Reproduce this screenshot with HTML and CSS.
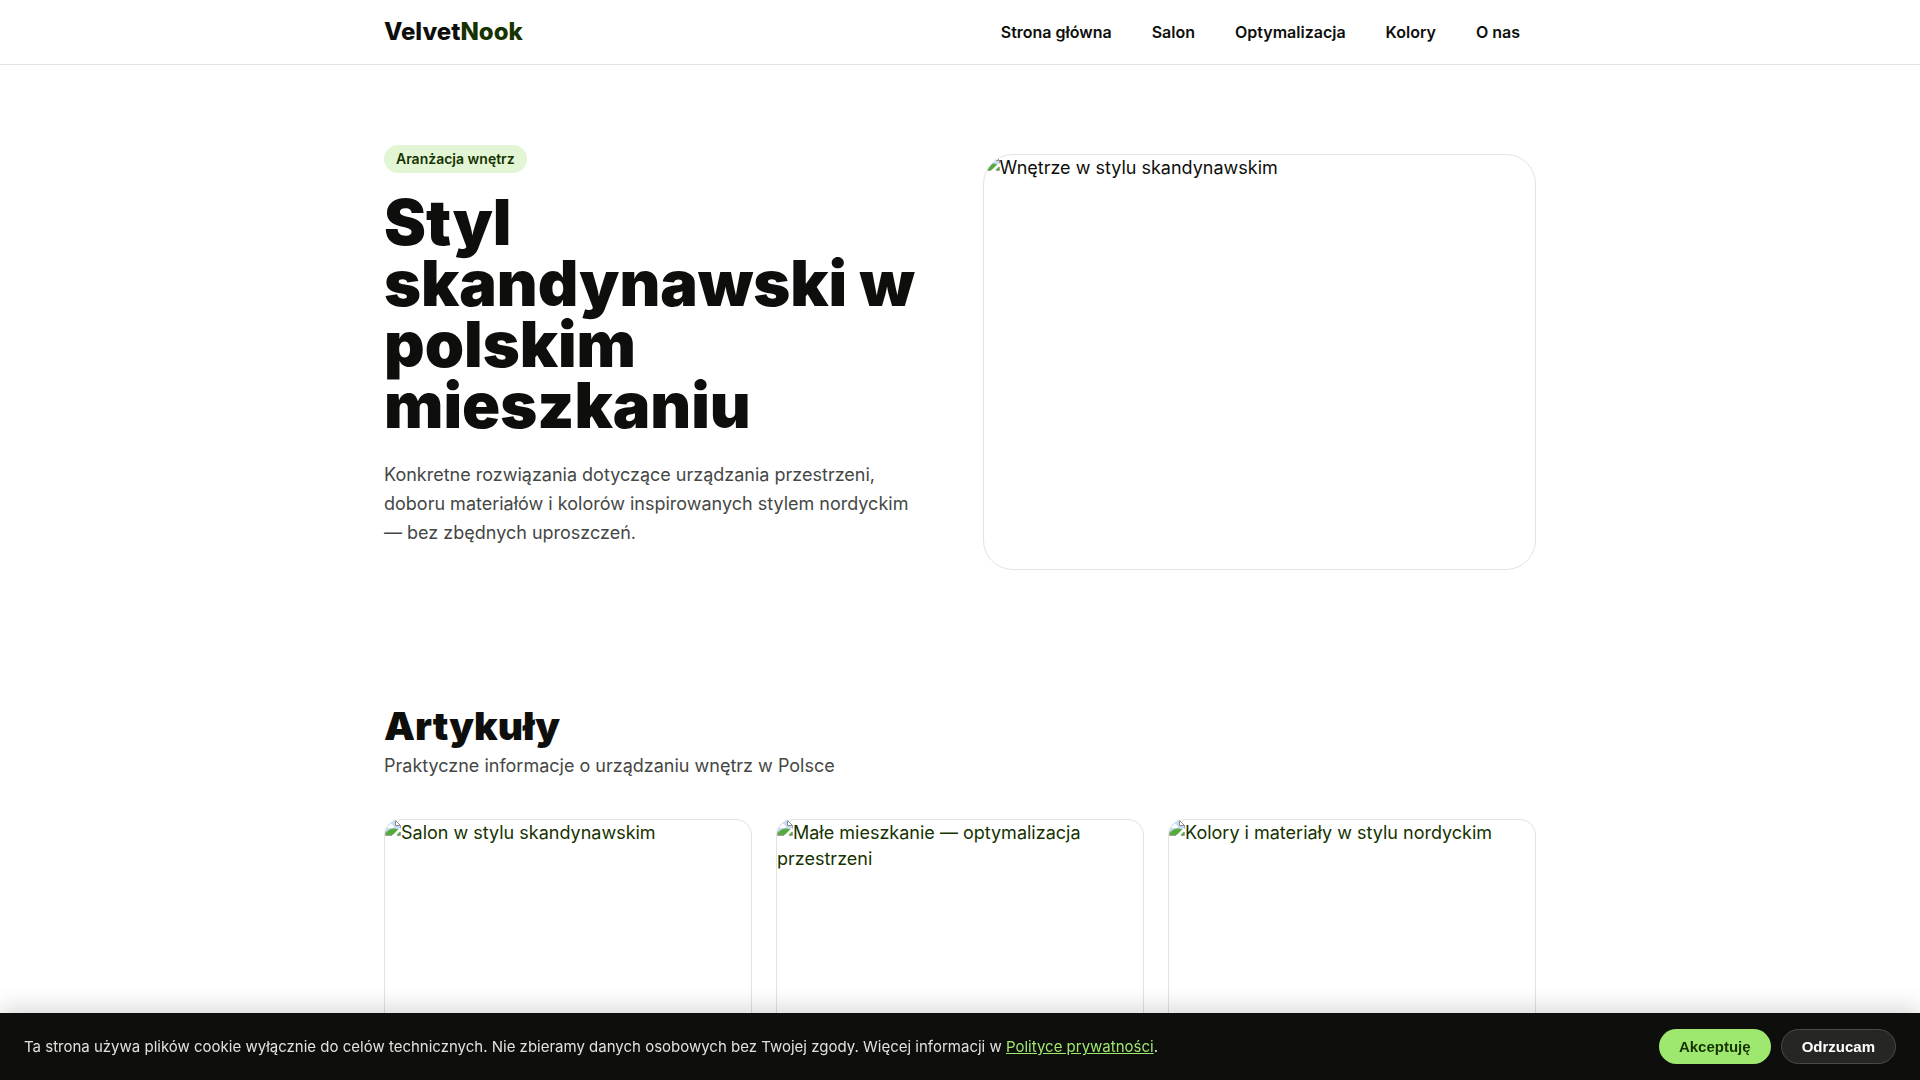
FILE: index.html
```html
<!DOCTYPE html>
<html lang="pl">
<head>
  <meta charset="UTF-8">
  <meta name="viewport" content="width=device-width, initial-scale=1.0">
  <title>VelvetNook</title>
  <link rel="stylesheet" href="styles.css">
</head>
<body>
<svg class="sprite" width="0" height="0" aria-hidden="true">
  <symbol id="missing" viewBox="0 0 16 16">
    <path d="M1 1h9.5L15 5.500V15H1z" fill="#c6d9f7"/>
    <path d="M3 8a1.600 1.600 0 0 1 1.200-2.600A2 2 0 0 1 8 5.500 1.400 1.400 0 0 1 8.500 8z" fill="#fff"/>
    <path d="M1 15v-2.500C3.500 9.800 6 8.600 9 8.600c2.500 0 4.500.9 6 2.400v4z" fill="#57ab3c"/>
    <path d="M6.500 16L16 7v3.500L10.500 16z" fill="#fff"/>
    <path d="M.5 15.500V.5h10l5 5v3M.5 15.500H7M12 15.500h3.500V12" fill="none" stroke="#a0a0a0"/>
    <path d="M10.500.5v5h5z" fill="#fff" stroke="#8c8c8c"/>
  </symbol>
</svg>

<header class="header">
  <div class="container header-inner">
    <a class="logo" href="#">Velvet<span>Nook</span></a>
    <nav class="nav">
      <a href="#">Strona główna</a>
      <a href="#">Salon</a>
      <a href="#">Optymalizacja</a>
      <a href="#">Kolory</a>
      <a href="#">O nas</a>
    </nav>
  </div>
</header>

<main>
  <section class="hero">
    <div class="container hero-grid">
      <div class="hero-text">
        <span class="tag">Aranżacja wnętrz</span>
        <h1>Styl skandynawski w polskim mieszkaniu</h1>
        <p class="lead">Konkretne rozwiązania dotyczące urządzania przestrzeni, doboru materiałów i kolorów inspirowanych stylem nordyckim — bez zbędnych uproszczeń.</p>
      </div>
      <div class="hero-image"><svg class="missing"><use href="#missing"/></svg>Wnętrze w stylu skandynawskim</div>
    </div>
  </section>

  <section class="articles">
    <div class="container">
      <h2>Artykuły</h2>
      <p class="subtitle">Praktyczne informacje o urządzaniu wnętrz w Polsce</p>
      <div class="cards">
        <a class="card" href="#"><svg class="missing"><use href="#missing"/></svg>Salon w stylu skandynawskim</a>
        <a class="card" href="#"><svg class="missing"><use href="#missing"/></svg>Małe mieszkanie — optymalizacja przestrzeni</a>
        <a class="card" href="#"><svg class="missing"><use href="#missing"/></svg>Kolory i materiały w stylu nordyckim</a>
      </div>
    </div>
  </section>
</main>

<div class="cookies">
  <p>Ta strona używa plików cookie wyłącznie do celów technicznych. Nie zbieramy danych osobowych bez Twojej zgody. Więcej informacji w <a href="#">Polityce prywatności</a>.</p>
  <div class="cookies-actions">
    <button class="btn btn-accept" type="button">Akceptuję</button>
    <button class="btn btn-reject" type="button">Odrzucam</button>
  </div>
</div>
</body>
</html>
```

FILE: styles.css
```css
* {
  box-sizing: border-box;
}
body {
  margin: 0;
  font-family: Inter, sans-serif;
  font-size: 18px;
  line-height: 26px;
  text-rendering: optimizeSpeed;
  color: #0e0f0c;
  background: #fff;
}
h1, h2, p {
  margin: 0;
}
a {
  color: #163300;
  text-decoration: none;
}
.sprite {
  position: absolute;
}
.container {
  max-width: 1200px;
  margin: 0 auto;
  padding: 0 24px;
}

/* header */
.header {
  border-bottom: 1px solid rgba(14, 15, 12, 0.12);
}
.header-inner {
  display: flex;
  align-items: center;
  justify-content: space-between;
  min-height: 64px;
}
.logo {
  font-size: 24px;
  font-weight: 800;
  color: #0e0f0c;
}
.logo span {
  color: #163300;
}
.nav {
  display: flex;
  gap: 8px;
}
.nav a {
  padding: 8px 16px;
  font-size: 16px;
  line-height: 24px;
  font-weight: 600;
  color: #0e0f0c;
}

/* hero */
.hero {
  padding: 80px 0;
}
.hero-grid {
  display: grid;
  grid-template-columns: 1fr 1fr;
  gap: 45px;
  align-items: center;
}
.hero-text {
  padding-bottom: 32px;
}
.tag {
  display: table;
  margin-bottom: 19px;
  padding: 4px 12px;
  border-radius: 999px;
  font-size: 14px;
  line-height: 20px;
  font-weight: 600;
  color: #163300;
  background: #e2f6d5;
}
h1 {
  margin-bottom: 24px;
  font-size: 63px;
  line-height: 61px;
  font-weight: 900;
}
.lead {
  max-width: 545px;
  line-height: 29px;
  color: #454745;
}
.hero-image {
  aspect-ratio: 4 / 3;
  border: 1px solid rgba(14, 15, 12, 0.12);
  border-radius: 30px;
  overflow: hidden;
}
.missing {
  width: 16px;
  height: 16px;
  vertical-align: 3px;
}

/* articles */
.articles {
  padding: 48px 0;
}
h2 {
  margin-bottom: 8px;
  font-size: 39px;
  line-height: 38px;
  font-weight: 900;
}
.subtitle {
  margin-bottom: 40px;
  color: #454745;
}
.cards {
  display: grid;
  grid-template-columns: repeat(3, 1fr);
  gap: 24px;
}
.card {
  min-height: 400px;
  border: 1px solid rgba(14, 15, 12, 0.12);
  border-radius: 16px;
  overflow: hidden;
}

/* cookie bar */
.cookies {
  position: fixed;
  left: 0;
  right: 0;
  bottom: 0;
  display: flex;
  align-items: center;
  justify-content: space-between;
  gap: 24px;
  padding: 16px 24px;
  color: #e0e0dc;
  background: #0e0f0c;
  box-shadow: 0 -4px 24px rgba(14, 15, 12, 0.18);
}
.cookies p {
  font-size: 15px;
  line-height: 21px;
}
.cookies a {
  color: #9fe870;
  text-decoration: underline;
}
.cookies-actions {
  display: flex;
  gap: 10px;
}
.btn {
  padding: 8px 20px;
  border: 0;
  border-radius: 999px;
  font-family: "Liberation Sans", Arial, sans-serif;
  font-size: 15px;
  line-height: 17px;
  font-weight: 700;
  cursor: pointer;
}
.btn-accept {
  color: #163300;
  background: #9fe870;
}
.btn-reject {
  border: 1px solid #4a4b48;
  color: #fff;
  background: #262725;
}
```
